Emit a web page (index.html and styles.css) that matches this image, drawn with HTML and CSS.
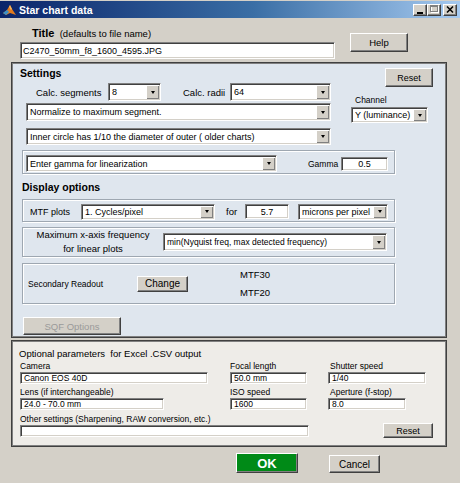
FILE: index.html
```html
<!DOCTYPE html>
<html>
<head>
<meta charset="utf-8">
<title>Star chart data</title>
<link rel="stylesheet" href="styles.css">
</head>
<body>
<div class="win">
  <div class="titlebar">
    <svg class="appicon" width="13" height="12" viewBox="0 0 13 12">
      <polygon points="0,9 4,6 7,1 9,5 13,11 7,9 3,11" fill="#e07a1f"/>
      <polygon points="0,9 4,6 6,8 3,11" fill="#3a8fc8"/>
      <polygon points="7,1 9,5 8,6 6,3" fill="#f4b860"/>
    </svg>
    <span class="ttl">Star chart data</span>
    <div class="tbtns">
      <span class="tb"><svg width="12" height="10" viewBox="0 0 12 10"><rect x="3" y="7" width="6" height="2" fill="#000"/></svg></span>
      <span class="tb"><svg width="12" height="10" viewBox="0 0 12 10"><rect x="3.5" y="1.5" width="7" height="6" fill="none" stroke="#fff"/><rect x="2.5" y="0.5" width="7" height="6" fill="none" stroke="#808080"/><rect x="2.5" y="1" width="7" height="1" fill="#808080"/></svg></span>
      <span class="tb close"><svg width="12" height="10" viewBox="0 0 12 10"><path d="M3 1.5 L9 7.5 M9 1.5 L3 7.5" stroke="#000" stroke-width="1.6"/></svg></span>
    </div>
  </div>

  <div class="titlesec">
    <div class="tcol">
      <div class="tlabel"><b>Title</b>&nbsp; <span>(defaults to file name)</span></div>
      <div class="fld title-in">C2470_50mm_f8_1600_4595.JPG</div>
    </div>
    <div class="btn help">Help</div>
  </div>

  <div class="panel settings">
    <div class="stop">
      <div class="sleft">
        <div class="h">Settings</div>
        <div class="calc">
          <span class="lbl-seg">Calc. segments</span>
          <div class="sel s8"><span>8</span><i></i></div>
          <span class="lbl-rad">Calc. radii</span>
          <div class="sel s64"><span>64</span><i></i></div>
        </div>
        <div class="sel norm"><span>Normalize to maximum segment.</span><i></i></div>
        <div class="sel inner"><span>Inner circle has 1/10 the diameter of outer ( older charts)</span><i></i></div>
      </div>
      <div class="sright">
        <div class="btn reset1">Reset</div>
        <div class="chlbl">Channel</div>
        <div class="sel ch"><span>Y (luminance)</span><i></i></div>
      </div>
    </div>

    <div class="sub gamma">
      <div class="sel gsel"><span>Enter gamma for linearization</span><i></i></div>
      <span class="glbl">Gamma</span>
      <div class="fld gin">0.5</div>
    </div>

    <div class="h disp">Display options</div>

    <div class="sub mtf">
      <span class="mlbl">MTF plots</span>
      <div class="sel msel"><span>1. Cycles/pixel</span><i></i></div>
      <span class="for">for</span>
      <div class="fld fin">5.7</div>
      <div class="sel usel"><span>microns per pixel</span><i></i></div>
    </div>

    <div class="sub maxf">
      <div class="mxlbl">Maximum x-axis frequency<br>for linear plots</div>
      <div class="sel mxsel"><span>min(Nyquist freq, max detected frequency)</span><i></i></div>
    </div>

    <div class="sub sec">
      <span class="seclbl">Secondary Readout</span>
      <div class="btn chg">Change</div>
      <div class="mtfs"><div>MTF30</div><div>MTF20</div></div>
    </div>

    <div class="btn sqf">SQF Options</div>
  </div>

  <div class="panel opt">
    <div class="otitle">Optional parameters &nbsp;for Excel .CSV output</div>
    <div class="orow r1">
      <div class="f f1"><div class="ol">Camera</div><div class="fld oi w188">Canon EOS 40D</div></div>
      <div class="f f2"><div class="ol">Focal length</div><div class="fld oi w77">50.0 mm</div></div>
      <div class="f f3"><div class="ol pl">Shutter speed</div><div class="fld oi w98">1/40</div></div>
    </div>
    <div class="orow r2">
      <div class="f f1"><div class="ol">Lens (if interchangeable)</div><div class="fld oi w144">24.0 - 70.0 mm</div></div>
      <div class="f f2"><div class="ol">ISO speed</div><div class="fld oi w77">1600</div></div>
      <div class="f f3"><div class="ol pl">Aperture (f-stop)</div><div class="fld oi w78">8.0</div></div>
    </div>
    <div class="orow r3">
      <div class="f"><div class="ol">Other settings (Sharpening, RAW conversion, etc.)</div><div class="fld oi w289"></div></div>
      <div class="btn reset2">Reset</div>
    </div>
  </div>

  <div class="bottom">
    <div class="btn ok">OK</div>
    <div class="btn cancel">Cancel</div>
  </div>
</div>
</body>
</html>
```

FILE: styles.css
```css
* { box-sizing: border-box; margin: 0; padding: 0; }
html, body { width: 460px; height: 483px; overflow: hidden; }
body {
  background: #d4d0c8;
  font-family: "Liberation Sans", Arial, sans-serif;
  font-size: 9.5px;
  color: #000;
}
.win { width: 460px; height: 483px; display: flex; flex-direction: column; }

/* title bar */
.titlebar {
  margin-top: 1px;
  height: 17px;
  display: flex;
  align-items: center;
  background: linear-gradient(to right, #0a246a, #3a6ea5 55%, #a6caf0);
}
.appicon { margin-left: 3px; }
.ttl { margin-left: 3px; color: #fff; font-weight: bold; font-size: 10.5px; }
.tbtns { margin-left: auto; margin-right: 3px; display: flex; }
.tb {
  width: 14px; height: 12px;
  background: #d4d0c8;
  border: 1px solid; border-color: #fff #404040 #404040 #fff;
  box-shadow: inset -1px -1px 0 #808080;
  display: flex; align-items: center; justify-content: center;
}
.tb.close { margin-left: 2px; }

/* title section */
.titlesec { height: 44px; display: flex; }
.tcol { padding-left: 20px; }
.tlabel { margin: 8px 0 0 12px; line-height: 14px; }
.tlabel b { font-size: 11px; }
.tlabel span { font-size: 9.5px; }
.title-in { margin-top: 1px; width: 315px; height: 17px; font-size: 8.5px; padding-left: 2px; }
.help { margin: 15px 0 0 15px; width: 58px; height: 19px; font-size: 10px; }

/* common controls */
.fld {
  background: #fff;
  border: 1px solid; border-color: #808080 #fff #fff #808080;
  box-shadow: inset 1px 1px 0 #404040, inset -1px -1px 0 #d4d0c8;
  display: flex; align-items: center;
  white-space: nowrap; overflow: hidden;
  font-size: 9px;
}
.sel {
  background: #fff;
  border: 1px solid; border-color: #808080 #fff #fff #808080;
  box-shadow: inset 1px 1px 0 #404040, inset -1px -1px 0 #d4d0c8;
  display: flex; align-items: center;
  padding: 1px 1px 1px 3px;
  font-size: 9px;
  white-space: nowrap;
}
.sel span { overflow: hidden; flex: 1; }
.sel i {
  flex: none;
  width: 13px; height: 100%;
  margin-left: 2px;
  background: #d4d0c8;
  box-shadow: inset 1px 1px 0 #fff, inset -1px -1px 0 #808080;
  display: flex; align-items: center; justify-content: center;
}
.sel i::after {
  content: "";
  border-left: 2.5px solid transparent;
  border-right: 2.5px solid transparent;
  border-top: 3px solid #000;
}
.btn {
  background: #d4d0c8;
  border: 1px solid; border-color: #fff #404040 #404040 #fff;
  box-shadow: inset -1px -1px 0 #808080;
  display: flex; align-items: center; justify-content: center;
  font-size: 9.5px;
  flex: none;
}
.panel {
  margin-left: 11px;
  width: 436px;
  border: 1px solid #404040;
  box-shadow: inset 1px 1px 0 #808080, inset -1px -1px 0 #808080;
  padding: 1px;
}
.sub {
  margin-left: 9px;
  width: 373px;
  border: 1px solid #9ea7b1;
  box-shadow: 1px 1px 0 #fff, inset 1px 1px 0 #fff;
  display: flex; align-items: center;
}
.h { font-weight: bold; font-size: 10.5px; line-height: 14px; }

/* settings */
.settings { height: 276px; background: #dfe6ee; }
.stop { display: flex; height: 81px; }
.sleft { width: 320px; }
.sleft .h { margin: 2px 0 0 7px; }
.calc { display: flex; align-items: center; margin-top: 3px; padding-left: 23px; height: 18px; }
.lbl-seg { width: 72px; }
.s8 { width: 53px; height: 18px; }
.lbl-rad { margin-left: 22px; width: 47px; }
.s64 { width: 101px; height: 18px; }
.norm { margin: 2px 0 0 13px; width: 305px; height: 18px; }
.inner { margin: 7px 0 0 13px; width: 305px; height: 17px; }
.sright { display: flex; flex-direction: column; align-items: flex-start; }
.reset1 { margin: 4px 0 0 52px; width: 48px; height: 19px; font-size: 9px; }
.chlbl { margin: 7px 0 0 22px; line-height: 12px; font-size: 8.5px; }
.ch { margin: 1px 0 0 18px; width: 77px; height: 16px; }

.gamma { margin-top: 5px; height: 24px; padding-top: 3px; }
.gsel { margin-left: 3px; width: 251px; height: 17px; }
.glbl { margin-left: 31px; width: 33px; font-size: 8.5px; }
.gin { width: 47px; height: 14px; justify-content: center; }

.disp { margin: 6px 0 0 9px; }

.mtf { margin-top: 5px; height: 23px; padding-top: 2px; }
.mlbl { margin-left: 7px; width: 51px; font-size: 9px; }
.msel { width: 134px; height: 16px; }
.for { margin-left: 11px; width: 19px; }
.fin { width: 44px; height: 15px; justify-content: center; }
.usel { margin-left: 9px; width: 90px; height: 16px; }

.maxf { margin-top: 5px; height: 30px; }
.mxlbl { width: 140px; text-align: center; line-height: 14px; }
.mxsel { width: 224px; height: 18px; font-size: 8.5px; }

.sec { margin-top: 6px; height: 41px; }
.seclbl { margin-left: 5px; width: 109px; font-size: 8.5px; }
.chg { width: 51px; height: 16px; font-size: 10px; }
.mtfs { margin-left: 52px; line-height: 18px; }

.sqf { margin: 13px 0 0 10px; width: 98px; height: 18px; color: #9a9a9a; }

/* optional */
.opt { margin-top: 2px; height: 107px; background: #eeece8; }
.otitle { margin: 6px 0 0 6px; line-height: 12px; }
.orow { display: flex; margin-left: 7px; }
.r2 { margin-top: 2px; }
.r3 { margin-top: 3px; }
.f1 { width: 210px; }
.f2 { width: 98px; }
.ol { line-height: 12px; font-size: 8.5px; white-space: nowrap; }
.ol.pl { padding-left: 2px; }
.oi { height: 12px; font-size: 8.5px; padding-left: 3px; }
.w188 { width: 188px; }
.w77 { width: 77px; }
.w98 { width: 98px; }
.w144 { width: 144px; }
.w78 { width: 78px; }
.w289 { width: 289px; }
.reset2 { margin: 0 0 -1px 74px; align-self: flex-end; width: 50px; height: 15px; font-size: 9px; }

/* bottom */
.bottom { display: flex; margin-top: 6px; padding-left: 236px; }
.ok { width: 62px; height: 20px; background: #008a17; color: #fff; font-weight: bold; font-size: 13px; }
.cancel { margin: 2px 0 0 31px; width: 51px; height: 18px; font-size: 10px; }
```
